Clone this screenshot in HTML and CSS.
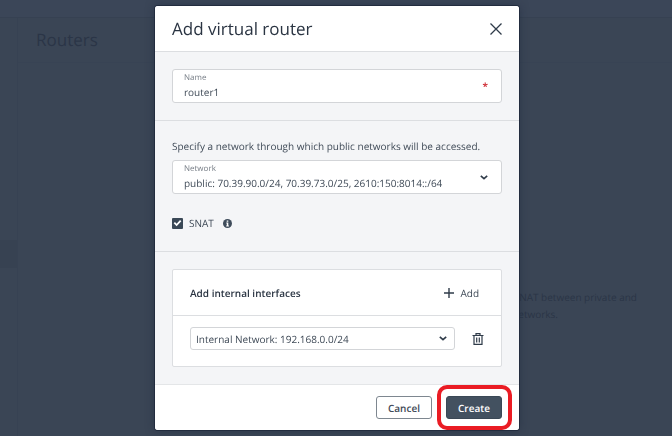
FILE: index.html
```
<!DOCTYPE html>
<html lang="en">
<head>
<meta charset="UTF-8">
<meta name="viewport" content="width=device-width, initial-scale=1.0">
<title>Add virtual router</title>
<link rel="stylesheet" href="styles.css">
</head>
<body>

<div class="page">
    <div class="topbar"></div>
    <div class="sidebar"><div class="sidebar-item"></div></div>
    <main class="content">
        <h1 class="page-title">Routers</h1>
        <div class="empty-text">
            <p>SNAT between private and</p>
            <p class="second-line">networks.</p>
        </div>
    </main>
</div>

<div class="overlay">
    <form class="modal" role="dialog" aria-labelledby="modalTitle">
        <header class="modal-header">
            <h2 id="modalTitle">Add virtual router</h2>
            <button type="button" class="icon-button" aria-label="Close">
                <svg width="12" height="12" viewBox="0 0 12 12"><path d="M.5.5l11 11M11.5.5L.5 11.5" stroke-width="1.3"/></svg>
            </button>
        </header>

        <section class="section">
            <div class="field">
                <div class="field-body">
                    <label for="name">Name</label>
                    <input type="text" id="name" value="router1" required>
                </div>
                <span class="required">*</span>
            </div>
        </section>

        <section class="section section-network">
            <p class="hint">Specify a network through which public networks will be accessed.</p>
            <div class="field">
                <div class="field-body">
                    <label for="network">Network</label>
                    <select id="network">
                        <option>public: 70.39.90.0/24, 70.39.73.0/25, 2610:150:8014::/64</option>
                    </select>
                </div>
                <svg class="chevron" width="8" height="5" viewBox="0 0 8 5"><path d="M.8.8L4 3.6 7.2.8"/></svg>
            </div>
            <div class="check-row">
                <input type="checkbox" id="snat" checked>
                <label for="snat">SNAT</label>
                <svg class="info" width="9" height="9" viewBox="0 0 9 9">
                    <circle cx="4.5" cy="4.5" r="4.5" fill="#3f4c5b"/>
                    <path d="M3.7 1.5h1.6v1.3H3.7zM3.3 3.6h2v2.9h.6v.9H3.2v-.9h.6v-2h-.5z" fill="#fff"/>
                </svg>
            </div>
        </section>

        <section class="section">
            <div class="panel">
                <div class="panel-header">
                    <h3>Add internal interfaces</h3>
                    <button type="button" class="add-button">
                        <svg width="10" height="10" viewBox="0 0 10 10"><path d="M5 0v10M0 5h10" stroke-width="1.4"/></svg>
                        Add
                    </button>
                </div>
                <div class="panel-row">
                    <div class="small-select">
                        <select aria-label="Internal network">
                            <option>Internal Network: 192.168.0.0/24</option>
                        </select>
                        <svg class="chevron" width="8" height="5" viewBox="0 0 8 5"><path d="M.8.8L4 3.6 7.2.8"/></svg>
                    </div>
                    <button type="button" class="icon-button" aria-label="Delete">
                        <svg width="12" height="12" viewBox="0 0 12 12"><path d="M.5 2.5h11M4 2.5V.6h4v1.9M2 2.5v8.9h8V2.5M4.7 4.5v5M7.3 4.5v5" stroke-width="1.2"/></svg>
                    </button>
                </div>
            </div>
        </section>

        <footer class="modal-footer">
            <button type="button" class="button">Cancel</button>
            <div class="highlight">
                <button type="submit" class="button primary">Create</button>
            </div>
        </footer>
    </form>
</div>

</body>
</html>
```
FILE: styles.css
```
* {
    box-sizing: border-box;
}
body {
    margin: 0;
    background-color: #3a4555;
    color: #3f4a57;
    font-family: 'Open Sans', 'Noto Sans', sans-serif;
    font-size: 10px;
    line-height: 16px;
    text-rendering: geometricPrecision;
}
h1, h2, h3, p {
    margin: 0;
    font-weight: normal;
}
input, select, button {
    font: inherit;
    color: inherit;
    text-rendering: inherit;
}
svg {
    display: block;
    flex: none;
    fill: none;
    stroke: #2f3b49;
}

/* page behind the dialog */
.page {
    display: grid;
    grid-template-columns: 18px 1fr;
    grid-template-rows: 18px 1fr;
    min-height: 100vh;
    color: #2b3547;
}
.topbar {
    grid-column: 1 / 3;
    background-color: #3b4658;
    border-bottom: 1px solid #364152;
}
.sidebar {
    padding-top: 222px;
    border-right: 1px solid #374253;
}
.sidebar-item {
    height: 28px;
    background-color: #374252;
}
.page-title {
    padding: 10px 18px;
    border-bottom: 1px solid #384354;
    font-size: 17px;
    line-height: 24px;
}
.empty-text {
    padding: 226px 35px 0 0;
    text-align: right;
    line-height: 17px;
}
.second-line {
    padding-right: 79px;
}

.overlay {
    position: fixed;
    inset: 0;
    display: flex;
    justify-content: center;
    align-items: center;
}
.modal {
    width: 100%;
    max-width: 364px;
    margin-left: 2px;
    background-color: #f4f5f7;
    border-radius: 3px;
    box-shadow: 0 0 0 1px #222c3e, 0 0 10px rgba(25, 35, 55, 0.5);
}
.modal-header {
    display: flex;
    justify-content: space-between;
    align-items: center;
    height: 45px;
    padding: 0 17px;
    background-color: #fff;
    border-radius: 3px 3px 0 0;
}
.modal-header h2 {
    font-size: 17px;
    line-height: 24px;
    color: #2a3442;
}
.icon-button {
    padding: 0;
    border: none;
    background: none;
    cursor: pointer;
}
.section {
    padding: 17px;
    border-top: 1px solid #dcdee1;
}
.section-network {
    padding-bottom: 20px;
}
.field {
    display: flex;
    align-items: center;
    height: 34px;
    padding: 0 13px 0 11px;
    background-color: #fff;
    border: 1px solid #d3d5d8;
    border-radius: 3px;
}
.field-body {
    flex: 1;
    min-width: 0;
}
.field label {
    display: block;
    font-size: 8px;
    line-height: 12px;
    color: #757c85;
}
.field input,
select {
    display: block;
    width: 100%;
    height: 16px;
    padding: 0;
    border: none;
    outline: none;
    background: none;
    appearance: none;
}
.required {
    font-weight: bold;
    color: #d0323a;
}
.chevron {
    stroke-width: 1.6;
}
.hint {
    padding-bottom: 6px;
}
.check-row {
    display: flex;
    align-items: center;
    padding-top: 21px;
}
.check-row input {
    width: 11px;
    height: 11px;
    margin: 0 6px 0 0;
    appearance: none;
    background-color: #3a4856;
    border-radius: 1px;
}
.check-row input:checked::before {
    content: '';
    display: block;
    height: 11px;
    background-color: #fff;
    clip-path: polygon(15% 52%, 27% 41%, 42% 56%, 73% 22%, 85% 33%, 42% 79%);
}
.info {
    margin-left: 9px;
    stroke: none;
}

.panel {
    background-color: #fff;
    border: 1px solid #dcdee1;
    border-radius: 2px;
}
.panel-header {
    display: flex;
    justify-content: space-between;
    align-items: center;
    height: 46px;
    padding: 0 22px 0 17px;
    border-bottom: 1px solid #dcdee1;
}
.panel-header h3 {
    font-size: 10px;
    font-weight: 600;
    color: #2a3442;
}
.add-button {
    display: flex;
    align-items: center;
    gap: 6px;
    padding: 0;
    border: none;
    background: none;
    cursor: pointer;
}
.panel-row {
    display: flex;
    align-items: center;
    gap: 17px;
    padding: 11px 17px 16px;
}
.small-select {
    flex: 1;
    display: flex;
    align-items: center;
    height: 23px;
    padding: 0 7px 0 5px;
    border: 1px solid #d3d5d8;
    border-radius: 3px;
}

.modal-footer {
    display: flex;
    justify-content: flex-end;
    gap: 14px;
    padding: 11px 17px;
    background-color: #fff;
    border-top: 1px solid #e4e6e8;
    border-radius: 0 0 3px 3px;
}
.button {
    display: block;
    width: 56px;
    height: 23px;
    padding: 0;
    border: 1px solid #7e8790;
    border-radius: 3px;
    background-color: #fff;
    font-weight: 600;
    line-height: 16px;
    cursor: pointer;
}
.primary {
    background-color: #435160;
    border-color: #3a4856;
    color: #fff;
}
.highlight {
    position: relative;
}
.highlight::after {
    content: '';
    position: absolute;
    inset: -11px -10px -11px -9px;
    border: 4px solid #ea1c24;
    border-radius: 10px;
    pointer-events: none;
}
```
